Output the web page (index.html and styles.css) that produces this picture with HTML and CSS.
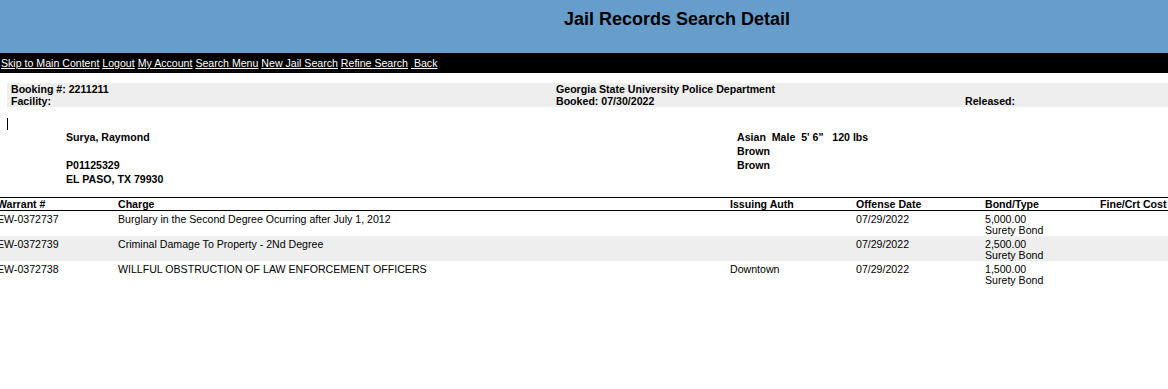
FILE: index.html
```html
<!DOCTYPE html>
<html lang="en">
    <head>
        <meta charset="UTF-8" />
        <title>Jail Records Search Detail</title>
        <link rel="stylesheet" href="styles.css">
    </head>
    <body>
        <div class="banner">
            <div class="banner-side"></div>
            <h1>Jail Records Search Detail</h1>
        </div>
        <div class="nav">
            <a href="#main">Skip to Main Content</a>
            <a href="#">Logout</a>
            <a href="#">My Account</a>
            <a href="#">Search Menu</a>
            <a href="#">New Jail Search</a>
            <a href="#">Refine Search</a> <a href="#">&nbsp;Back</a>
        </div>

        <div class="booking" id="main">
            <div>Booking #: 2211211<br>Facility:</div>
            <div>Georgia State University Police Department<br>Booked: 07/30/2022</div>
            <div><br>Released:</div>
        </div>

        <div class="caret"></div>

        <div class="person">
            <div class="person-left">Surya, Raymond<br>&nbsp;<br>P01125329<br>EL PASO, TX 79930</div>
            <div class="person-right">Asian&nbsp; Male&nbsp; 5' 6"&nbsp;&nbsp; 120 lbs<br>Brown<br>Brown</div>
        </div>

        <table class="charges">
            <colgroup>
                <col class="c-warrant">
                <col class="c-charge">
                <col class="c-auth">
                <col class="c-date">
                <col class="c-bond">
                <col class="c-fine">
            </colgroup>
            <thead>
                <tr>
                    <th>Warrant #</th>
                    <th>Charge</th>
                    <th>Issuing Auth</th>
                    <th>Offense Date</th>
                    <th>Bond/Type</th>
                    <th>Fine/Crt Cost</th>
                </tr>
            </thead>
            <tbody>
                <tr>
                    <td>EW-0372737</td>
                    <td>Burglary in the Second Degree Ocurring after July 1, 2012</td>
                    <td></td>
                    <td>07/29/2022</td>
                    <td>5,000.00<br>Surety Bond</td>
                    <td></td>
                </tr>
                <tr class="alt">
                    <td>EW-0372739</td>
                    <td>Criminal Damage To Property - 2Nd Degree</td>
                    <td></td>
                    <td>07/29/2022</td>
                    <td>2,500.00<br>Surety Bond</td>
                    <td></td>
                </tr>
                <tr>
                    <td>EW-0372738</td>
                    <td>WILLFUL OBSTRUCTION OF LAW ENFORCEMENT OFFICERS</td>
                    <td>Downtown</td>
                    <td>07/29/2022</td>
                    <td>1,500.00<br>Surety Bond</td>
                    <td></td>
                </tr>
            </tbody>
        </table>
    </body>
</html>
```

FILE: styles.css
```css
body {
    font-family: "Liberation Sans", Arial, sans-serif;
    font-size: 10.6px;
    margin: 0;
    padding: 0;
    color: #000000;
    background-color: #ffffff;
    overflow-x: hidden;
}
.banner {
    display: grid;
    grid-template-columns: 186px 1fr;
    height: 53px;
    background-color: #669dca;
}
.banner h1 {
    margin: 0;
    padding-top: 9px;
    font-size: 18px;
    font-weight: bold;
    text-align: center;
    line-height: 20px;
}
.nav {
    height: 20px;
    padding-left: 1px;
    background-color: #000000;
    line-height: 21px;
}
.nav a {
    color: #ffffff;
    text-decoration: underline;
}
.booking {
    display: grid;
    grid-template-columns: 545px 409px 1fr;
    margin: 10px 0 0 7px;
    padding-left: 4px;
    height: 24px;
    background-color: #eeeeee;
    font-weight: bold;
    line-height: 12px;
}
.caret {
    width: 1px;
    height: 12px;
    margin: 11px 0 0 7px;
    background-color: #000000;
}
.person {
    display: grid;
    grid-template-columns: 737px 1fr;
    height: 67px;
    font-weight: bold;
    line-height: 14px;
}
.person-left {
    padding-left: 66px;
}
.charges {
    width: 1180px;
    margin-left: -3px;
    border-collapse: collapse;
    font-size: 10.6px;
}
.charges col.c-warrant { width: 121px; }
.charges col.c-charge { width: 612px; }
.charges col.c-auth { width: 126px; }
.charges col.c-date { width: 129px; }
.charges col.c-bond { width: 115px; }
.charges th {
    padding: 0;
    height: 12px;
    line-height: 12px;
    text-align: left;
    border-top: 1px solid #000000;
    border-bottom: 1px solid #000000;
}
.charges td {
    padding: 3px 0 0 0;
    height: 22px;
    line-height: 11px;
    vertical-align: top;
}
.charges tr.alt td {
    background-color: #eeeeee;
}
```
